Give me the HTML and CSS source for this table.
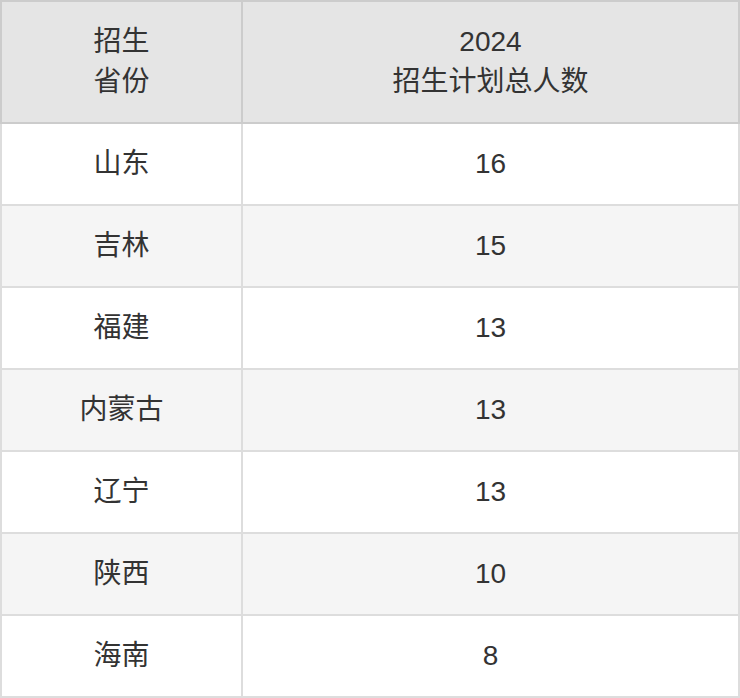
FILE: index.html
```html
<!DOCTYPE html>
<html lang="zh-CN">
<head>
<meta charset="utf-8">
<title>招生计划</title>
<link rel="stylesheet" href="styles.css">
</head>
<body>
<table class="plan">
  <thead>
    <tr>
      <th class="col-prov">招生<br>省份</th>
      <th class="col-num">2024<br>招生计划总人数</th>
    </tr>
  </thead>
  <tbody>
    <tr><td>山东</td><td>16</td></tr>
    <tr><td>吉林</td><td>15</td></tr>
    <tr><td>福建</td><td>13</td></tr>
    <tr><td>内蒙古</td><td>13</td></tr>
    <tr><td>辽宁</td><td>13</td></tr>
    <tr><td>陕西</td><td>10</td></tr>
    <tr><td>海南</td><td>8</td></tr>
  </tbody>
</table>
</body>
</html>
```

FILE: styles.css
```css
html, body {
  margin: 0;
  padding: 0;
  background: #ffffff;
}

.plan {
  width: 740px;
  border-collapse: collapse;
  table-layout: fixed;
  font-family: "Liberation Sans", "Noto Sans CJK SC", sans-serif;
  font-size: 28px;
  line-height: 40px;
  color: #333333;
}

.plan th,
.plan td {
  text-align: center;
  vertical-align: middle;
  font-weight: normal;
  padding: 0;
}

.plan th {
  height: 120px;
  background: #e5e5e5;
  border: 2px solid #cccccc;
}

.plan td {
  height: 80px;
  border: 2px solid #dddddd;
}

.plan tbody tr:nth-child(even) td {
  background: #f5f5f5;
}

.col-prov {
  width: 239px;
}
```
